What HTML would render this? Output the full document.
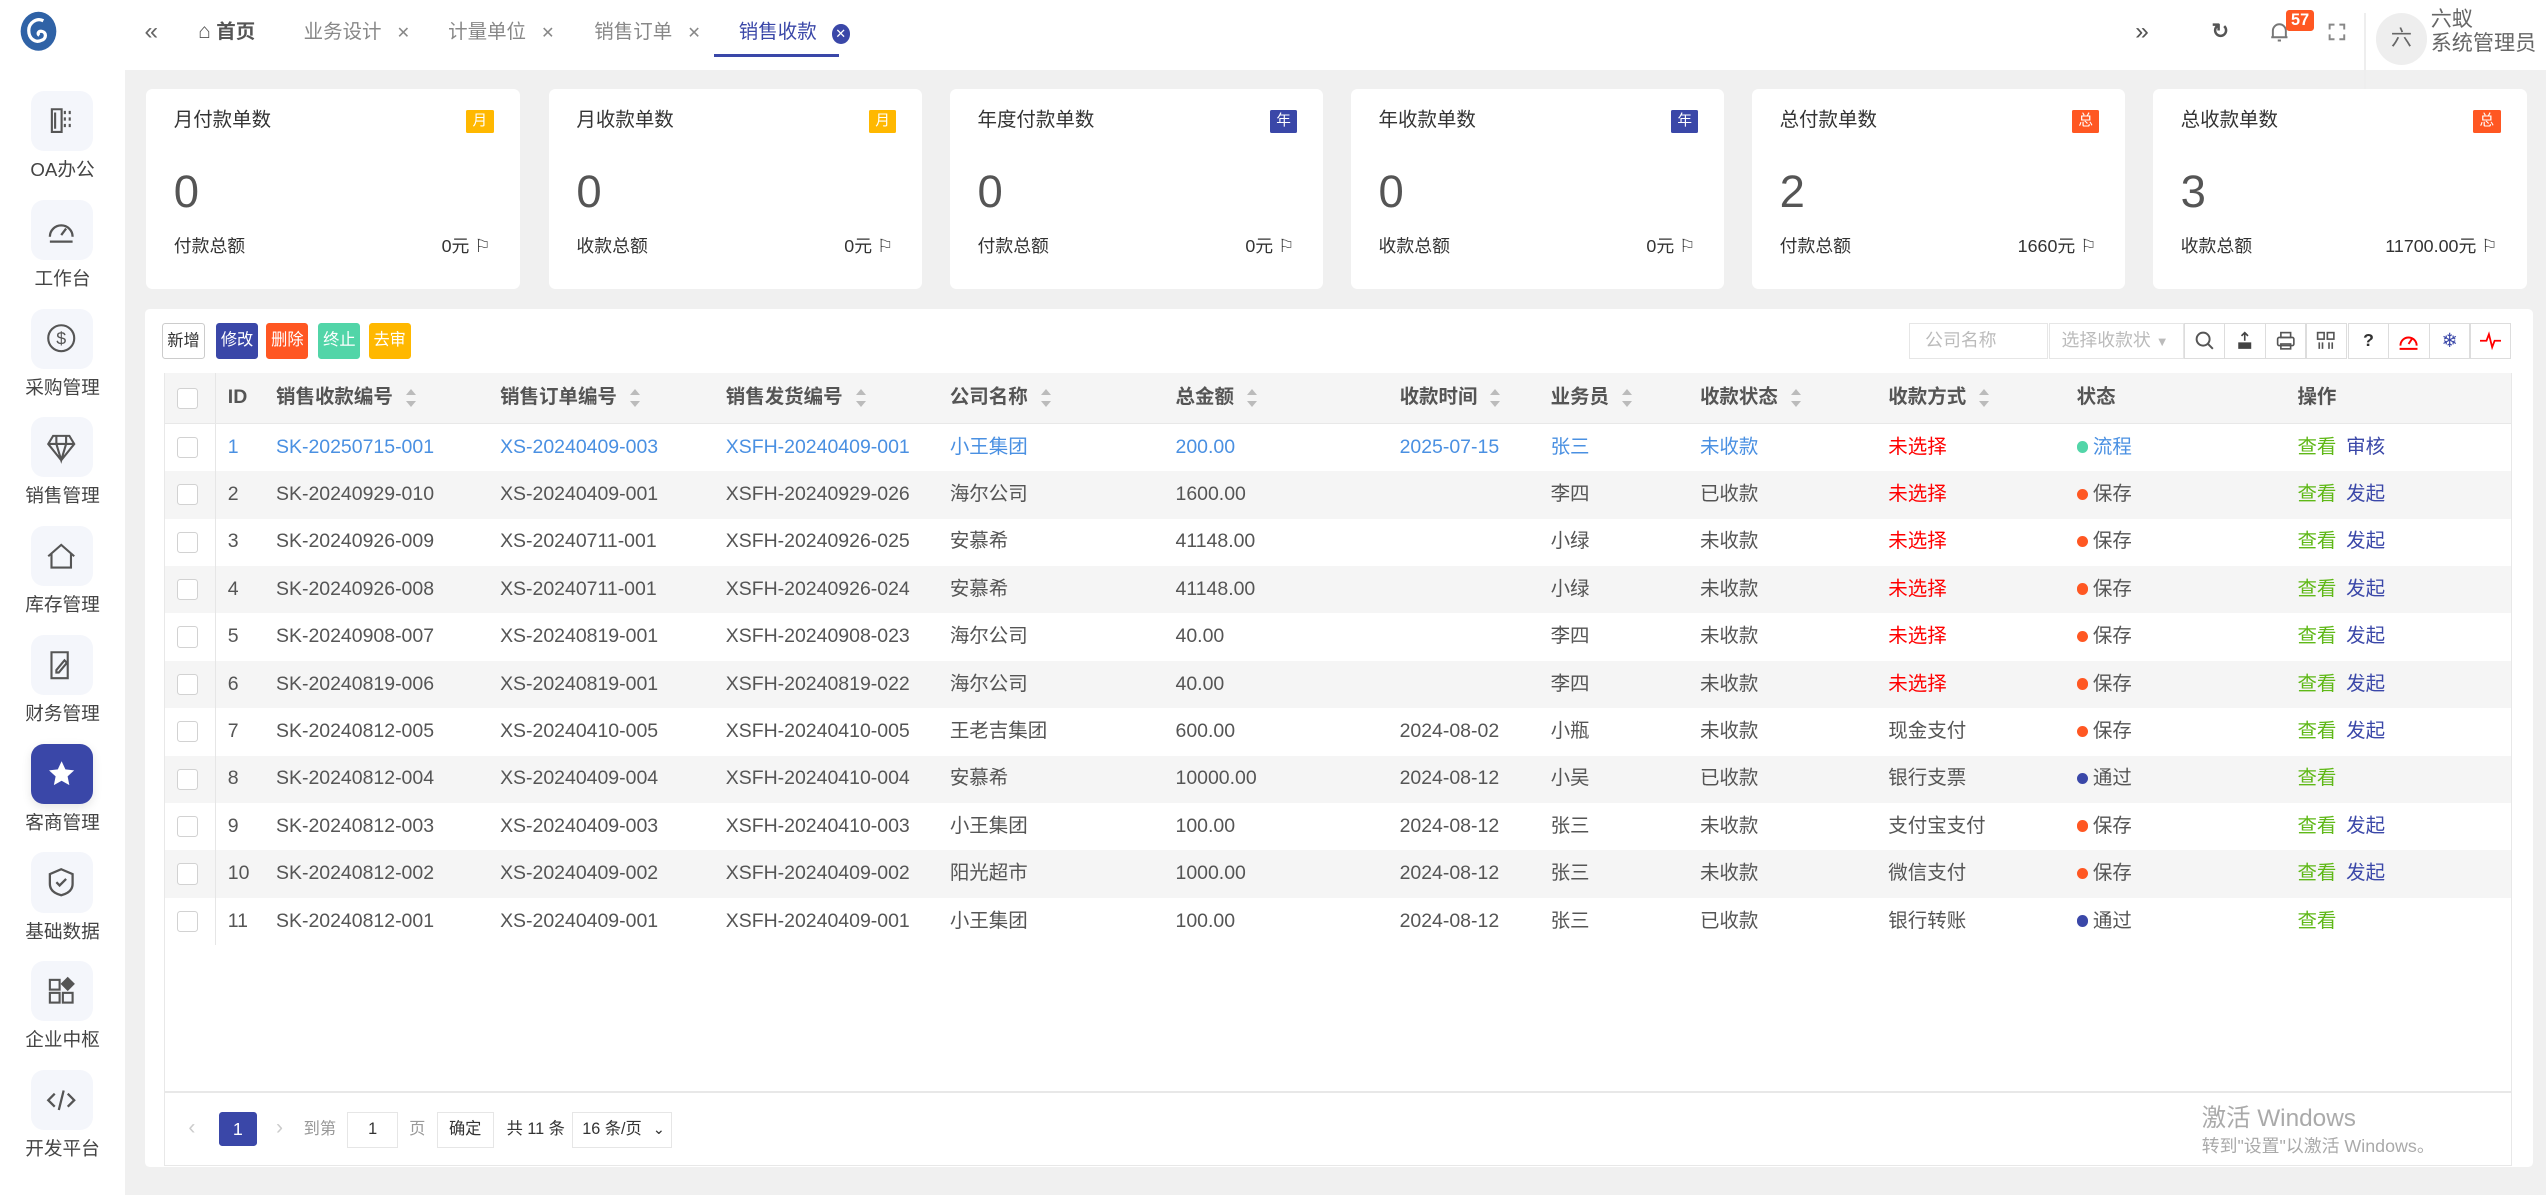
<!DOCTYPE html>
<html><head><meta charset="utf-8"><style>
*{margin:0;padding:0;box-sizing:border-box}
html,body{width:2546px;height:1195px;overflow:hidden;background:#f0f0f0}
#w{zoom:1.62372;width:1568px;height:736px;position:relative;font-family:"Liberation Sans","Noto Sans CJK SC",sans-serif;font-size:12px;color:#555;background:#f0f0f0}
.abs{position:absolute}
#side{left:0;top:0;width:77px;height:736px;background:#fff}
.mi{position:absolute;left:19px;width:38px;height:37px;border-radius:8px;background:#f4f6fb;display:flex;align-items:center;justify-content:center}
.ml{position:absolute;left:0;width:77px;text-align:center;font-size:11.5px;color:#444;line-height:14px}
#top{left:77px;top:0;right:0;height:43px;background:#fff}
.tab{position:absolute;top:13px;font-size:12px;color:#888;line-height:14px}
.card{position:absolute;top:55px;width:230px;height:123px;background:#fff;border-radius:4px}
.card .t{position:absolute;left:17px;top:12px;font-size:12px;color:#333;line-height:14px}
.card .b{position:absolute;right:16px;top:13px;height:14px;padding:0 4px;font-size:9px;color:#fff;line-height:14px;border-radius:1px}
.card .n{position:absolute;left:17px;top:47px;font-size:28px;color:#555;line-height:32px}
.card .s{position:absolute;left:17px;top:90px;font-size:11px;color:#333;line-height:14px}
.card .r{position:absolute;right:18px;top:90px;font-size:11px;color:#333;line-height:14px}
.btn{position:absolute;top:199px;height:22px;width:26px;font-size:10px;line-height:22px;text-align:center;color:#fff;border-radius:2px}
table{position:absolute;left:101px;top:230px;width:1446px;border-collapse:collapse;table-layout:fixed}
td,th{height:29.2px;padding-left:7px;text-align:left;white-space:nowrap;overflow:hidden;font-size:12px;line-height:16px;vertical-align:middle}
th{background:#f5f5f5;height:31px;color:#555;font-weight:bold;border-bottom:1px solid #e8e8e8}
tr:nth-child(odd) td{background:#f5f5f5}
td.c,th.c{padding-left:8px;border-right:1px solid #e6e6e6;box-shadow:2px 0 3px rgba(0,0,0,.06)}
.cb{display:inline-block;width:13px;height:13px;border:1px solid #d2d2d2;background:#fff;border-radius:2px;vertical-align:middle}
.so{display:inline-block;margin-left:8px;vertical-align:middle;width:7px;height:11px;position:relative}
.so:before{content:"";position:absolute;top:0;left:0;border:3.5px solid transparent;border-bottom:4px solid #bbb;border-top:0}
.so:after{content:"";position:absolute;bottom:0;left:0;border:3.5px solid transparent;border-top:4px solid #bbb;border-bottom:0}
.blue td{color:#4a90e2}
.red{color:#f00!important}
.g{color:#5fb817;margin-right:6px}
.p{color:#3a47a8}
.dot{display:inline-block;width:7px;height:7px;border-radius:50%;margin-right:3px;vertical-align:0}
.tb{position:absolute;top:199px;width:25.3px;height:22px;border:1px solid #ddd;background:#fff;display:flex;align-items:center;justify-content:center;font-size:11px}
</style></head><body><div id="w">
<div id="side" class="abs">
<svg class="abs" style="left:12px;top:7px" width="24" height="25" viewBox="0 0 24 25"><ellipse cx="12" cy="12.5" rx="11" ry="12" fill="#2f62a6"/><path d="M15 6c-4-2-9 1-9 6s4 8 8 6c3-1 3-5 0-5.5-2-.3-3 1.5-1.5 2.5" stroke="#fff" stroke-width="2" fill="none"/></svg>
<div class="mi" style="top:56px"><svg width="18" height="18" viewBox="0 0 18 18" fill="none" stroke="#555" stroke-width="1.3"><path d="M3 2h6v14H3zM5 4v10M11 3v2M11 7v2M11 11v2M14 3v2M14 7v2M14 11v2"/></svg></div><div class="ml" style="top:98px">OA办公</div>
<div class="mi" style="top:123px"><svg width="20" height="20" viewBox="0 0 20 20" fill="none" stroke="#555" stroke-width="1.4"><path d="M3 14a7 7 0 1 1 14 0M10 13l3-4M3 17h14"/></svg></div><div class="ml" style="top:165px">工作台</div>
<div class="mi" style="top:190px"><svg width="20" height="20" viewBox="0 0 20 20" fill="none" stroke="#555" stroke-width="1.3"><circle cx="10" cy="10" r="8"/><text x="10" y="14" font-size="11" text-anchor="middle" fill="#555" stroke="none">$</text></svg></div><div class="ml" style="top:232px">采购管理</div>
<div class="mi" style="top:257px"><svg width="20" height="20" viewBox="0 0 20 20" fill="none" stroke="#555" stroke-width="1.3"><path d="M5 3h10l3 5-8 10L2 8zM2 8h16M7 8l3 10 3-10M7 3l0 5M13 3v5"/></svg></div><div class="ml" style="top:299px">销售管理</div>
<div class="mi" style="top:324px"><svg width="20" height="20" viewBox="0 0 20 20" fill="none" stroke="#555" stroke-width="1.3"><path d="M2 10l8-7 8 7M4 8v9h12V8"/></svg></div><div class="ml" style="top:366px">库存管理</div>
<div class="mi" style="top:391px"><svg width="20" height="20" viewBox="0 0 20 20" fill="none" stroke="#555" stroke-width="1.3"><path d="M4 2h10v16H4zM7 13l5-6 1.5 1.5-5 6H7z"/></svg></div><div class="ml" style="top:433px">财务管理</div>
<div class="mi" style="top:458px;background:#3a47a8;box-shadow:0 2px 6px rgba(0,0,0,.1)"><svg width="18" height="18" viewBox="0 0 20 20"><path d="M10 1.5l2.6 5.6 6 .7-4.5 4.1 1.2 6-5.3-3-5.3 3 1.2-6L1.4 7.8l6-.7z" fill="#fff"/></svg></div><div class="ml" style="top:500px">客商管理</div>
<div class="mi" style="top:525px"><svg width="20" height="20" viewBox="0 0 20 20" fill="none" stroke="#555" stroke-width="1.4"><path d="M10 2l7 3v6c0 4-3 6-7 7-4-1-7-3-7-7V5zM7 10l2 2 4-4"/></svg></div><div class="ml" style="top:567px">基础数据</div>
<div class="mi" style="top:592px"><svg width="20" height="20" viewBox="0 0 20 20" fill="none" stroke="#555" stroke-width="1.3"><rect x="3" y="3" width="6" height="6"/><rect x="3" y="11" width="6" height="6"/><rect x="11" y="11" width="6" height="6"/><path d="M14 2l3.5 3.5L14 9l-3.5-3.5z" fill="#555"/></svg></div><div class="ml" style="top:634px">企业中枢</div>
<div class="mi" style="top:659px"><svg width="20" height="20" viewBox="0 0 20 20" fill="none" stroke="#555" stroke-width="1.4"><path d="M6 6l-4 4 4 4M14 6l4 4-4 4M11.5 4l-3 12"/></svg></div><div class="ml" style="top:701px">开发平台</div>
</div>
<div id="top" class="abs"></div>
<div class="abs" style="left:89px;top:12px;font-size:15px;color:#666;line-height:16px">«</div>
<div class="tab" style="left:122px;color:#555"><span style="font-size:13px">⌂</span> <b style="font-weight:bold">首页</b></div>
<div class="tab" style="left:187px">业务设计 <span style="margin-left:6px;font-size:10px">✕</span></div>
<div class="tab" style="left:276px">计量单位 <span style="margin-left:6px;font-size:10px">✕</span></div>
<div class="tab" style="left:366px">销售订单 <span style="margin-left:6px;font-size:10px">✕</span></div>
<div class="tab" style="left:455px;color:#3a47a8">销售收款 <span style="display:inline-block;margin-left:6px;width:11px;height:12px;border-radius:50%;background:#3a47a8;color:#fff;font-size:8px;text-align:center;line-height:12px">✕</span></div>
<div class="abs" style="left:440px;top:33px;width:77px;height:2px;background:#3a47a8"></div>
<div class="abs" style="left:1315px;top:12px;font-size:15px;color:#555;line-height:16px">»</div>
<div class="abs" style="left:1362px;top:12px;font-size:13px;color:#555;font-weight:bold;line-height:16px">↻</div>
<svg class="abs" style="left:1397px;top:13px" width="14" height="14" viewBox="0 0 14 14" fill="none" stroke="#777" stroke-width="1.2"><path d="M3 10V6a4 4 0 0 1 8 0v4H2h10M6 12h2"/></svg>
<div class="abs" style="left:1408px;top:6px;background:#ff5722;color:#fff;font-size:10px;font-weight:bold;padding:0 3px;height:13px;line-height:13px;border-radius:2px">57</div>
<svg class="abs" style="left:1434px;top:14px" width="11" height="11" viewBox="0 0 11 11" fill="none" stroke="#888" stroke-width="1.2"><path d="M1 4V1h3M7 1h3v3M10 7v3H7M4 10H1V7"/></svg>
<div class="abs" style="left:1456px;top:8px;width:1px;height:49px;background:#eee"></div>
<div class="abs" style="left:1463px;top:8px;width:32px;height:32px;border-radius:50%;background:#eee;color:#666;text-align:center;line-height:32px;font-size:13px">六</div>
<div class="abs" style="left:1497px;top:5px;font-size:13px;color:#666;line-height:15px">六蚁<br>系统管理员</div>
<div class="card" style="left:90px"><div class="t">月付款单数</div><div class="b" style="background:#ffb800">月</div><div class="n">0</div><div class="s">付款总额</div><div class="r">0元 ⚐</div></div>
<div class="card" style="left:338px"><div class="t">月收款单数</div><div class="b" style="background:#ffb800">月</div><div class="n">0</div><div class="s">收款总额</div><div class="r">0元 ⚐</div></div>
<div class="card" style="left:585px"><div class="t">年度付款单数</div><div class="b" style="background:#3a47a8">年</div><div class="n">0</div><div class="s">付款总额</div><div class="r">0元 ⚐</div></div>
<div class="card" style="left:832px"><div class="t">年收款单数</div><div class="b" style="background:#3a47a8">年</div><div class="n">0</div><div class="s">收款总额</div><div class="r">0元 ⚐</div></div>
<div class="card" style="left:1079px"><div class="t">总付款单数</div><div class="b" style="background:#ff5722">总</div><div class="n">2</div><div class="s">付款总额</div><div class="r">1660元 ⚐</div></div>
<div class="card" style="left:1326px"><div class="t">总收款单数</div><div class="b" style="background:#ff5722">总</div><div class="n">3</div><div class="s">收款总额</div><div class="r">11700.00元 ⚐</div></div>
<div class="abs" style="left:89px;top:190px;width:1471px;height:529px;background:#fff;border-radius:3px"></div>
<div class="btn" style="left:100px;background:#fff;color:#333;border:1px solid #ccc">新增</div>
<div class="btn" style="left:133px;background:#3a47a8">修改</div>
<div class="btn" style="left:164px;background:#ff5722">删除</div>
<div class="btn" style="left:196px;background:#52d5a8">终止</div>
<div class="btn" style="left:227px;background:#ffb800">去审</div>
<div class="abs" style="left:1176px;top:199px;width:85px;height:22px;border:1px solid #e6e6e6;color:#bbb;padding:0 9px;font-size:11px;line-height:20px">公司名称</div>
<div class="abs" style="left:1262px;top:199px;width:83px;height:22px;border:1px solid #e6e6e6;color:#bbb;padding:0 7px;font-size:11px;line-height:20px">选择收款状 <span style="font-size:8px">▼</span></div>
<div class="tb" style="left:1345px"><svg width="12" height="12" viewBox="0 0 12 12" fill="none" stroke="#555" stroke-width="1.2"><circle cx="5" cy="5" r="4"/><path d="M8 8l3 3"/></svg></div>
<div class="tb" style="left:1370px"><svg width="12" height="12" viewBox="0 0 12 12"><path d="M2 7h8v4H2z" fill="#444"/><path d="M6 1v5M4 3l2-2 2 2" stroke="#444" fill="none"/></svg></div>
<div class="tb" style="left:1395px"><svg width="12" height="12" viewBox="0 0 12 12" fill="none" stroke="#555"><rect x="3" y="1" width="6" height="3"/><rect x="1" y="4" width="10" height="5" rx="1"/><rect x="3" y="8" width="6" height="3"/></svg></div>
<div class="tb" style="left:1420px"><svg width="12" height="12" viewBox="0 0 12 12" fill="none" stroke="#555"><rect x="1" y="1" width="4" height="4"/><rect x="7" y="1" width="4" height="4"/><path d="M2 7v4M4 7v4M8 7v4M10 7v4"/></svg></div>
<div class="tb" style="left:1446px;font-weight:bold;color:#333">?</div>
<div class="tb" style="left:1471px"><svg width="13" height="12" viewBox="0 0 13 12" fill="none" stroke="#f00" stroke-width="1.2"><path d="M1.5 9a5 5 0 1 1 10 0M6.5 8l2-3M1 11h11"/></svg></div>
<div class="tb" style="left:1496px;color:#3a47a8;font-size:12px">❄</div>
<div class="tb" style="left:1521px"><svg width="13" height="12" viewBox="0 0 13 12" fill="none" stroke="#f00" stroke-width="1.1"><path d="M0 6h4l1.5-4 2 8 1.5-4h4"/></svg></div>
<table>
<colgroup><col style="width:32px"><col style="width:30px"><col style="width:138px"><col style="width:139px"><col style="width:138px"><col style="width:139px"><col style="width:138px"><col style="width:93px"><col style="width:92px"><col style="width:116px"><col style="width:116px"><col style="width:136px"><col style="width:139px"></colgroup>
<tr><th class="c"><span class="cb"></span></th><th>ID</th><th>销售收款编号<span class="so"></span></th><th>销售订单编号<span class="so"></span></th><th>销售发货编号<span class="so"></span></th><th>公司名称<span class="so"></span></th><th>总金额<span class="so"></span></th><th>收款时间<span class="so"></span></th><th>业务员<span class="so"></span></th><th>收款状态<span class="so"></span></th><th>收款方式<span class="so"></span></th><th>状态</th><th>操作</th></tr>
<tr class="blue"><td class="c"><span class="cb"></span></td><td>1</td><td>SK-20250715-001</td><td>XS-20240409-003</td><td>XSFH-20240409-001</td><td>小王集团</td><td>200.00</td><td>2025-07-15</td><td>张三</td><td>未收款</td><td class="red">未选择</td><td><span class="dot" style="background:#52d5a8"></span>流程</td><td><span class="g">查看</span><span class="p">审核</span></td></tr>
<tr><td class="c"><span class="cb"></span></td><td>2</td><td>SK-20240929-010</td><td>XS-20240409-001</td><td>XSFH-20240929-026</td><td>海尔公司</td><td>1600.00</td><td></td><td>李四</td><td>已收款</td><td class="red">未选择</td><td><span class="dot" style="background:#ff5722"></span>保存</td><td><span class="g">查看</span><span class="p">发起</span></td></tr>
<tr><td class="c"><span class="cb"></span></td><td>3</td><td>SK-20240926-009</td><td>XS-20240711-001</td><td>XSFH-20240926-025</td><td>安慕希</td><td>41148.00</td><td></td><td>小绿</td><td>未收款</td><td class="red">未选择</td><td><span class="dot" style="background:#ff5722"></span>保存</td><td><span class="g">查看</span><span class="p">发起</span></td></tr>
<tr><td class="c"><span class="cb"></span></td><td>4</td><td>SK-20240926-008</td><td>XS-20240711-001</td><td>XSFH-20240926-024</td><td>安慕希</td><td>41148.00</td><td></td><td>小绿</td><td>未收款</td><td class="red">未选择</td><td><span class="dot" style="background:#ff5722"></span>保存</td><td><span class="g">查看</span><span class="p">发起</span></td></tr>
<tr><td class="c"><span class="cb"></span></td><td>5</td><td>SK-20240908-007</td><td>XS-20240819-001</td><td>XSFH-20240908-023</td><td>海尔公司</td><td>40.00</td><td></td><td>李四</td><td>未收款</td><td class="red">未选择</td><td><span class="dot" style="background:#ff5722"></span>保存</td><td><span class="g">查看</span><span class="p">发起</span></td></tr>
<tr><td class="c"><span class="cb"></span></td><td>6</td><td>SK-20240819-006</td><td>XS-20240819-001</td><td>XSFH-20240819-022</td><td>海尔公司</td><td>40.00</td><td></td><td>李四</td><td>未收款</td><td class="red">未选择</td><td><span class="dot" style="background:#ff5722"></span>保存</td><td><span class="g">查看</span><span class="p">发起</span></td></tr>
<tr><td class="c"><span class="cb"></span></td><td>7</td><td>SK-20240812-005</td><td>XS-20240410-005</td><td>XSFH-20240410-005</td><td>王老吉集团</td><td>600.00</td><td>2024-08-02</td><td>小瓶</td><td>未收款</td><td>现金支付</td><td><span class="dot" style="background:#ff5722"></span>保存</td><td><span class="g">查看</span><span class="p">发起</span></td></tr>
<tr><td class="c"><span class="cb"></span></td><td>8</td><td>SK-20240812-004</td><td>XS-20240409-004</td><td>XSFH-20240410-004</td><td>安慕希</td><td>10000.00</td><td>2024-08-12</td><td>小吴</td><td>已收款</td><td>银行支票</td><td><span class="dot" style="background:#3a47a8"></span>通过</td><td><span class="g">查看</span></td></tr>
<tr><td class="c"><span class="cb"></span></td><td>9</td><td>SK-20240812-003</td><td>XS-20240409-003</td><td>XSFH-20240410-003</td><td>小王集团</td><td>100.00</td><td>2024-08-12</td><td>张三</td><td>未收款</td><td>支付宝支付</td><td><span class="dot" style="background:#ff5722"></span>保存</td><td><span class="g">查看</span><span class="p">发起</span></td></tr>
<tr><td class="c"><span class="cb"></span></td><td>10</td><td>SK-20240812-002</td><td>XS-20240409-002</td><td>XSFH-20240409-002</td><td>阳光超市</td><td>1000.00</td><td>2024-08-12</td><td>张三</td><td>未收款</td><td>微信支付</td><td><span class="dot" style="background:#ff5722"></span>保存</td><td><span class="g">查看</span><span class="p">发起</span></td></tr>
<tr><td class="c"><span class="cb"></span></td><td>11</td><td>SK-20240812-001</td><td>XS-20240409-001</td><td>XSFH-20240409-001</td><td>小王集团</td><td>100.00</td><td>2024-08-12</td><td>张三</td><td>已收款</td><td>银行转账</td><td><span class="dot" style="background:#3a47a8"></span>通过</td><td><span class="g">查看</span></td></tr>
</table>
<div class="abs" style="left:101px;top:230px;width:1446px;height:488px;border:1px solid #e8e8e8;border-top:0;pointer-events:none"></div>
<div class="abs" style="left:101px;top:672px;width:1446px;height:1px;background:#e8e8e8"></div>
<div class="abs" style="left:116px;top:687px;color:#ccc;font-size:13px;line-height:16px">‹</div>
<div class="abs" style="left:135px;top:685px;width:23px;height:21px;background:#3a47a8;color:#fff;border-radius:2px;text-align:center;line-height:21px;font-size:11px">1</div>
<div class="abs" style="left:170px;top:687px;color:#ccc;font-size:13px;line-height:16px">›</div>
<div class="abs" style="left:187px;top:690px;color:#999;font-size:10px;line-height:12px">到第</div>
<div class="abs" style="left:214px;top:685px;width:31px;height:22px;border:1px solid #e6e6e6;text-align:center;line-height:20px;font-size:10px;color:#333">1</div>
<div class="abs" style="left:252px;top:690px;color:#999;font-size:10px;line-height:12px">页</div>
<div class="abs" style="left:269px;top:685px;width:35px;height:22px;border:1px solid #e6e6e6;text-align:center;line-height:20px;font-size:10px;color:#333">确定</div>
<div class="abs" style="left:312px;top:690px;color:#333;font-size:10px;line-height:12px">共 11 条</div>
<div class="abs" style="left:352px;top:685px;width:62px;height:22px;border:1px solid #e6e6e6;line-height:20px;font-size:10px;color:#333;padding-left:6px">16 条/页 <span style="font-size:9px;margin-left:4px">⌄</span></div>
<div class="abs" style="left:1356px;top:680px;font-size:15px;color:#aaa;line-height:18px">激活 Windows</div>
<div class="abs" style="left:1356px;top:699px;font-size:11px;color:#aaa;line-height:14px">转到"设置"以激活 Windows。</div>
</div></body></html>
